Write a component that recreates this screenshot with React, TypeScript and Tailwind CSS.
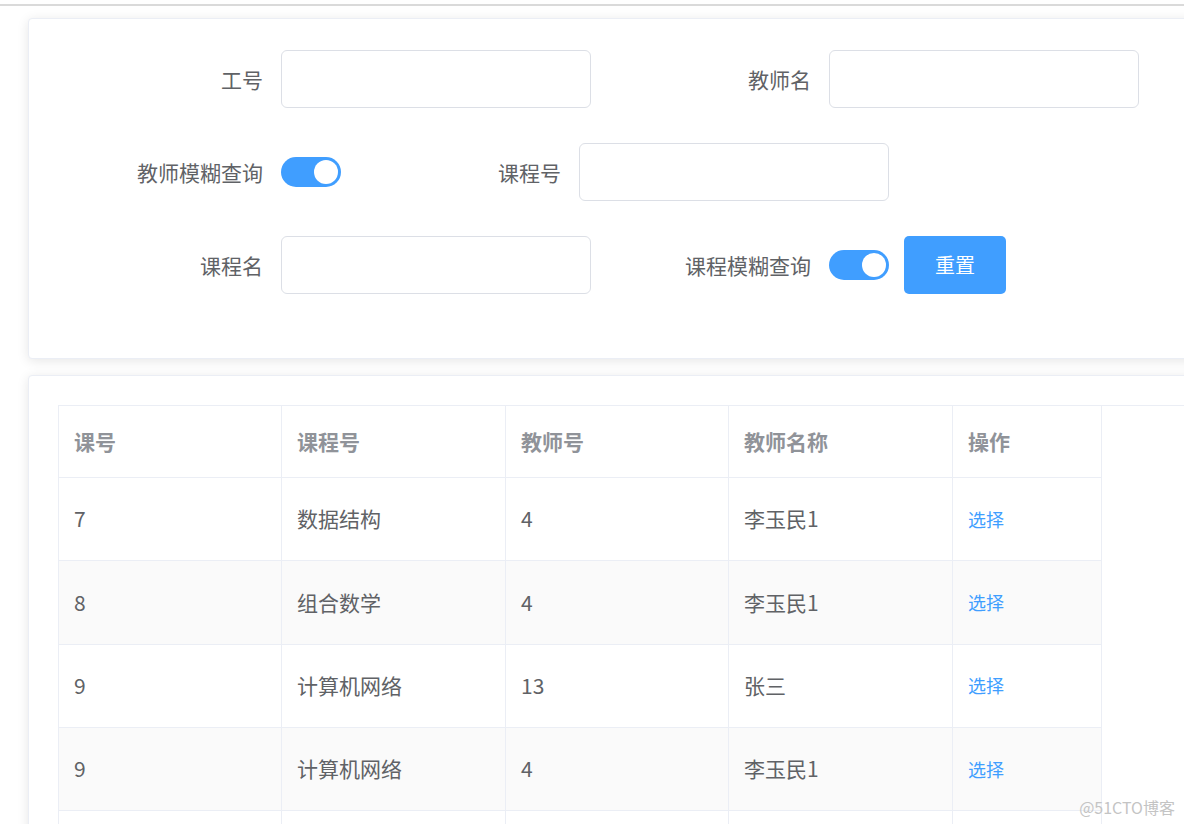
import React from "react";

const font = { fontFamily: '"Noto Sans CJK SC", "Noto Sans", sans-serif' };

function Label({ text }: { text: string }) {
  return (
    <div className="w-[224px] shrink-0 pr-[18px] text-right text-[21px] leading-[28px] text-[#606266]">
      {text}
    </div>
  );
}

function Input() {
  return <div className="h-[58px] w-[310px] shrink-0 rounded-[6px] border border-[#dcdfe6] bg-white" />;
}

function Switch() {
  return (
    <div className="flex h-[30px] w-[60px] shrink-0 items-center justify-end rounded-full bg-[#409eff] pr-[3px]">
      <div className="h-[24px] w-[24px] rounded-full bg-white" />
    </div>
  );
}

const rows = [
  ["7", "数据结构", "4", "李玉民1", "选择"],
  ["8", "组合数学", "4", "李玉民1", "选择"],
  ["9", "计算机网络", "13", "张三", "选择"],
  ["9", "计算机网络", "4", "李玉民1", "选择"],
  ["", "", "", "", ""],
];

const widths = ["w-[223px]", "w-[224px]", "w-[223px]", "w-[224px]", "w-[149px]"];

export default function App() {
  return (
    <div className="relative h-[824px] w-[1184px] overflow-hidden bg-white" style={font}>
      <div className="h-[4px] bg-white" />
      <div className="h-[2px] bg-[#dadada]" />
      <div className="flex flex-col gap-[16px] pl-[28px] pt-[12px]">
        {/* search card */}
        <div className="w-[1220px] rounded-[4px] border border-[#ebeef5] bg-white pl-[28px] pr-[28px] pb-[29px] pt-[31px] shadow-[0_2px_12px_0_rgba(0,0,0,0.1)]">
          <div className="mb-[35px] flex h-[58px] items-center">
            <Label text="工号" />
            <Input />
            <div className="w-[14px] shrink-0" />
            <Label text="教师名" />
            <Input />
          </div>
          <div className="mb-[35px] flex h-[58px] items-center">
            <Label text="教师模糊查询" />
            <Switch />
            <div className="w-[14px] shrink-0" />
            <Label text="课程号" />
            <Input />
          </div>
          <div className="mb-[35px] flex h-[58px] items-center">
            <Label text="课程名" />
            <Input />
            <div className="w-[14px] shrink-0" />
            <Label text="课程模糊查询" />
            <Switch />
            <div className="w-[15px] shrink-0" />
            <button className="flex h-[58px] w-[102px] items-center justify-center rounded-[5px] bg-[#409eff] text-[20px] text-white">
              重置
            </button>
          </div>
        </div>

        {/* table card */}
        <div className="w-[1220px] rounded-[4px] border border-[#ebeef5] bg-white pl-[29px] pr-[28px] pt-[29px] shadow-[0_2px_12px_0_rgba(0,0,0,0.1)]">
          <div className="border-l border-t border-[#ebeef5]">
            <div className="flex h-[72px]">
              {["课号", "课程号", "教师号", "教师名称", "操作"].map((h, i) => (
                <div
                  key={h}
                  className={`${widths[i]} flex shrink-0 items-center border-b border-r border-[#ebeef5] pl-[15px] text-[21px] font-bold text-[#909399]`}
                >
                  {h}
                </div>
              ))}
            </div>
            {rows.map((r, ri) => (
              <div key={ri} className="flex h-[83.3px]">
                {r.map((c, ci) => (
                  <div
                    key={ci}
                    className={`${widths[ci]} flex shrink-0 items-center border-b border-r border-[#ebeef5] pl-[15px] ${
                      ci === 4 ? "text-[18px] text-[#409eff]" : "text-[21px] text-[#606266]"
                    } ${ri % 2 === 1 ? "bg-[#fafafa]" : "bg-white"}`}
                  >
                    {c}
                  </div>
                ))}
              </div>
            ))}
          </div>
        </div>
      </div>
      <div className="absolute bottom-[7px] right-[9px] text-[16px] leading-[20px] text-[#c4c4c4]">@51CTO博客</div>
    </div>
  );
}
